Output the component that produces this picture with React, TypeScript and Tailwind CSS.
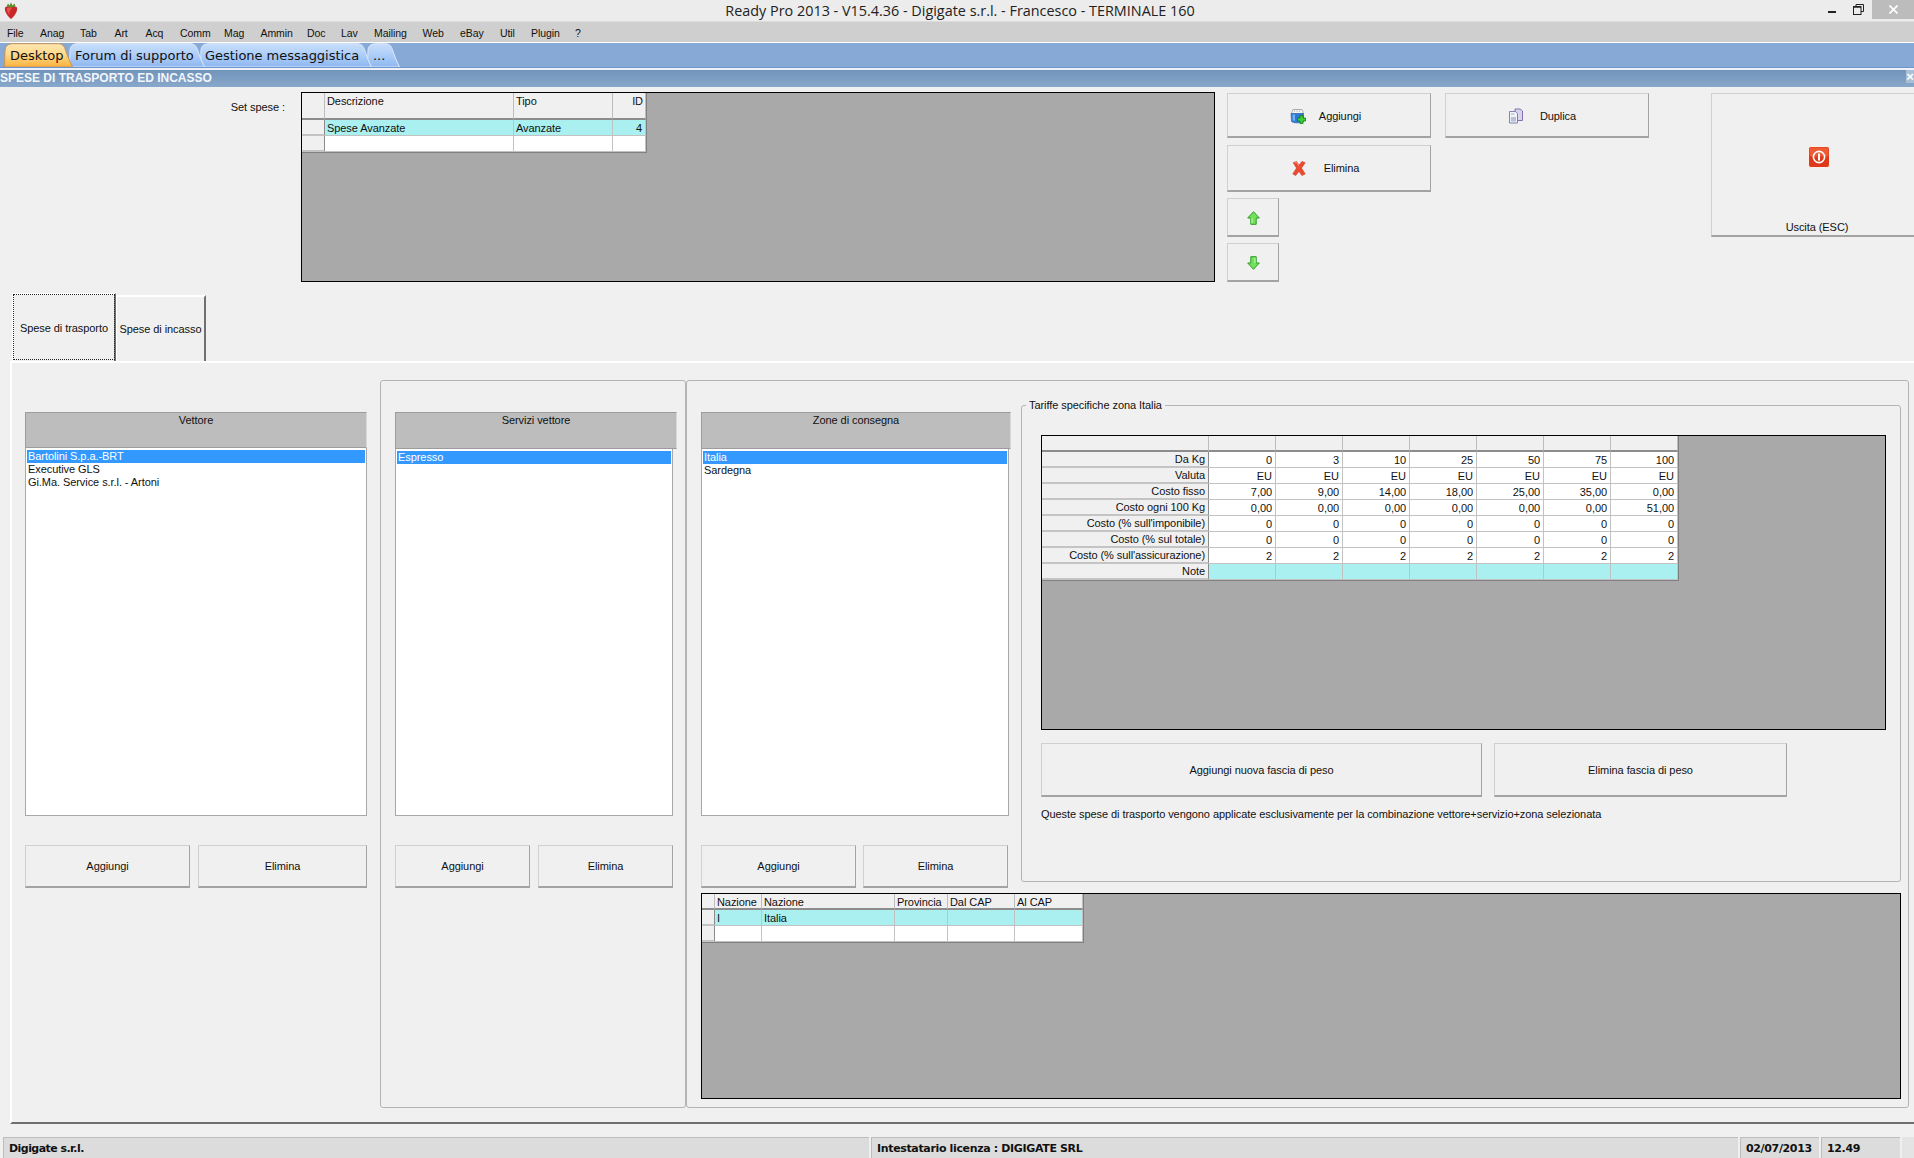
import React from "react";

const MENU: [string, string][] = [
  ["File", "w-[33px]"], ["Anag", "w-[40px]"], ["Tab", "w-[34.5px]"], ["Art", "w-[31px]"],
  ["Acq", "w-[34.5px]"], ["Comm", "w-[44px]"], ["Mag", "w-[36.5px]"], ["Ammin", "w-[46.5px]"],
  ["Doc", "w-[34px]"], ["Lav", "w-[33px]"], ["Mailing", "w-[48.5px]"], ["Web", "w-[37.5px]"],
  ["eBay", "w-[40px]"], ["Util", "w-[31px]"], ["Plugin", "w-[44px]"], ["?", "w-[10px]"],
];

function Strawberry() {
  return (
    <svg width="14" height="17" viewBox="0 0 14 17" className="ml-[4px] shrink-0">
      <path d="M1 5.5C3 3.5 11 3.5 13 5.5C14 9 10 15 7 17C4 15 0 9 1 5.5Z" fill="#c9262a" />
      <path d="M3 6C5 5 7 5 8 6C6 8 5 11 5.5 13C3.5 11 2.5 8 3 6Z" fill="#e2534a" />
      <path d="M2.5 4.5L4 1.5L5.5 3.5L7 0.5L8.5 3.5L10.5 1.5L11.5 4.5L7 5.5Z" fill="#5d8a2c" />
    </svg>
  );
}

function AddIcon() {
  return (
    <svg width="16" height="16" viewBox="0 0 16 16" className="shrink-0">
      <path d="M3 1.5H12L13 3.5V6H2V3.5Z" fill="#f3f3f3" stroke="#9a9a9a" strokeWidth="0.8" />
      <path d="M4.5 2.2V4M7 2.2V4M9.5 2.2V4" stroke="#b5b5b5" strokeWidth="0.8" />
      <path d="M1 5.5H13.5V13.5C12 15.3 3 15.3 1.5 13.5Z" fill="#2f78d6" stroke="#1c5aa8" strokeWidth="0.6" />
      <path d="M2.5 6.5H5V13L2.8 12.5Z" fill="#6fb0ef" />
      <path d="M10 7.5H13V10H15.5V13H13V15.5H10V13H7.5V10H10Z" fill="#3fce3c" stroke="#0f7a16" strokeWidth="0.8" />
    </svg>
  );
}

function DupIcon() {
  return (
    <svg width="16" height="16" viewBox="0 0 16 16" className="shrink-0">
      <path d="M7 1H12L14.5 3V12.5H7Z" fill="#d9d3ea" stroke="#7768a8" strokeWidth="0.9" />
      <path d="M1.5 3.5H7.5L9.5 5.5V15H1.5Z" fill="#f1f2f8" stroke="#6f79ab" strokeWidth="0.9" />
      <rect x="3" y="9" width="5" height="4.5" fill="#b8bfd9" />
      <path d="M3 6H6.5" stroke="#a2a9c8" strokeWidth="0.9" />
    </svg>
  );
}

function XIcon() {
  return (
    <svg width="14" height="15" viewBox="0 0 16 18" className="shrink-0">
      <path d="M1 2L5 0.5L8 5L11.5 0.5L15.5 2L11 8.5L15.5 15.5L11.5 17.5L8 12.5L4 17.5L0.5 15.5L5 8.5Z" fill="#ea4a2e" stroke="#c9301c" strokeWidth="0.6" />
      <path d="M3 2L5 1.5L8 6.5" stroke="#fb9a80" strokeWidth="1" fill="none" />
    </svg>
  );
}

function ArrowIcon({ down }: { down?: boolean }) {
  return (
    <svg width="13" height="14" viewBox="0 0 13 14" className={down ? "rotate-180 shrink-0" : "shrink-0"}>
      <path d="M6.5 0.7L12.3 7H9.2V13.3H3.8V7H0.7Z" fill="#6fe25a" stroke="#2f9a25" strokeWidth="1" />
      <path d="M5 7V12.3" stroke="#b6f5a6" strokeWidth="1.2" />
    </svg>
  );
}

function PowerIcon() {
  return (
    <svg width="22" height="22" viewBox="0 0 22 22" className="shrink-0">
      <rect x="0.5" y="0.5" width="21" height="21" rx="2.5" fill="#dd3a1c" stroke="#fdeee8" />
      <rect x="1.5" y="1.5" width="19" height="9" rx="2" fill="#ee5a34" />
      <circle cx="11" cy="11" r="5.6" fill="none" stroke="#fff" strokeWidth="1.6" />
      <rect x="10" y="7.5" width="2" height="7" fill="#fff" />
    </svg>
  );
}

function Btn({ className, children }: { className: string; children?: React.ReactNode }) {
  return (
    <div className={"flex items-center justify-center pt-[1px] shrink-0 bg-[#f0f0f0] border-[1.5px] border-t-[#cfcfd4] border-l-[#cfcfd4] border-r-[#a3a3a3] border-b-2 border-b-[#a3a3a3] text-[#111] " + className}>
      {children}
    </div>
  );
}

function Tab({ w, wc, label, active, ml, tx, z }: { w: number; wc: string; label: string; active?: boolean; ml?: string; tx: string; z: string }) {
  const id = active ? "tabActive" : "tabNormal" + w;
  return (
    <div className={"relative h-[24px] text-[13px] tracking-[-0.03px] text-[#111] [font-family:'DejaVu_Sans',sans-serif] " + wc + " " + z + " " + (ml ?? "")}>
      <svg className="absolute inset-0 w-full h-full" viewBox={`0 0 ${w} 24`}>
        <defs>
          <linearGradient id={id} x1="0" y1="0" x2="0" y2="1">
            <stop offset="0" stopColor={active ? "#fde6b2" : "#c8defb"} />
            <stop offset="0.45" stopColor={active ? "#ffd98a" : "#aecff9"} />
            <stop offset="1" stopColor={active ? "#fbb23e" : "#8fb7f0"} />
          </linearGradient>
        </defs>
        <path
          d={`M0.5 24L1 7Q1.5 1 8 0.7H${w - 14}Q${w - 9} 1 ${w - 7.5} 7Q${w - 5} 15 ${w - 0.5} 24Z`}
          fill={`url(#${id})`}
          stroke={active ? "#c4935a" : "#dbe8fb"}
          strokeWidth="1"
        />
      </svg>
      <span className={"relative block whitespace-nowrap leading-[26px] " + tx}>{label}</span>
    </div>
  );
}

function HeaderCell({ children, right, top }: { children?: React.ReactNode; right?: boolean; top?: boolean }) {
  return (
    <td className={"bg-[#f0f0f0] border-r border-r-[#bdbdbd] border-b-2 border-b-[#8c8c8c] p-0 pl-[2px] pr-[2px] " + (top ? "align-top pt-[2px] " : "pt-[2px] leading-[12px] ") + (right ? "text-right" : "text-left")}>
      {children}
    </td>
  );
}

function Cell({ children, right, bg }: { children?: React.ReactNode; right?: boolean; bg?: string }) {
  return (
    <td className={"border-r border-b border-[#c2c2c2] p-0 pl-[2px] pr-[3px] pt-[1px] whitespace-nowrap overflow-hidden " + (bg ?? "bg-white") + (right ? " text-right" : " text-left")}>
      {children}
    </td>
  );
}

function RowHead({ children, right }: { children?: React.ReactNode; right?: boolean }) {
  return (
    <td className={"bg-[#f0f0f0] border-r border-r-[#8c8c8c] border-b-2 border-b-[#c4c4c4] p-0 pl-[2px] pr-[3px] pt-[1px] whitespace-nowrap " + (right ? "text-right" : "")}>
      {children}
    </td>
  );
}

function ListBox({ title, items, wrapW, listW, headH, listH }: { title: string; items: string[]; wrapW: string; listW: string; headH: string; listH: string }) {
  return (
    <div className={"flex flex-col " + wrapW}>
      <div className={"bg-[#bdbdbd] border border-[#d8d8d8] border-t-[#9c9c9c] border-l-[#9c9c9c] border-b-[#9c9c9c] text-center pt-[1px] leading-[13px] " + headH}>{title}</div>
      <div className={"bg-white border border-[#a8a8a8] border-t-0 px-[1px] pt-[2px] " + listH + " " + listW}>
        {items.map((t, i) => (
          <div key={t} className={"h-[13px] leading-[13px] px-[1px] whitespace-nowrap " + (i === 0 ? "bg-[#3399ff] text-white" : "text-[#111]")}>{t}</div>
        ))}
      </div>
    </div>
  );
}

const TARIFFE: [string, string[]][] = [
  ["Da Kg", ["0","3","10","25","50","75","100"]],
  ["Valuta", ["EU","EU","EU","EU","EU","EU","EU"]],
  ["Costo fisso", ["7,00","9,00","14,00","18,00","25,00","35,00","0,00"]],
  ["Costo ogni 100 Kg", ["0,00","0,00","0,00","0,00","0,00","0,00","51,00"]],
  ["Costo (% sull'imponibile)", ["0","0","0","0","0","0","0"]],
  ["Costo (% sul totale)", ["0","0","0","0","0","0","0"]],
  ["Costo (% sull'assicurazione)", ["2","2","2","2","2","2","2"]],
];

export default function App() {
  return (
    <div className="w-[1914px] h-[1158px] overflow-hidden flex flex-col bg-[#f0f0f0] text-[11px] tracking-[-0.07px] leading-[13px] text-[#111] [font-family:'Liberation_Sans',Arial,sans-serif]">
      {/* Window title */}
      <div className="h-[22px] shrink-0 flex items-center bg-[#ececec] border-b border-[#dcdcdc]">
        <Strawberry />
        <div className="flex-1 text-center text-[14.4px] tracking-normal text-[#222] pl-[74px] [font-family:'Open_Sans',sans-serif]">Ready Pro 2013 - V15.4.36 - Digigate s.r.l. - Francesco - TERMINALE 160</div>
        <div className="flex items-start self-start h-[19px]">
          <div className="w-[8px] h-[2px] bg-[#222] mt-[11px] mr-[17px]" />
          <svg width="11" height="11" viewBox="0 0 11 11" className="mt-[4px] mr-[8px]">
            <path d="M3 2.5V0.5H10.5V7.5H8" fill="none" stroke="#222" strokeWidth="1" />
            <rect x="0.5" y="2.5" width="7.5" height="8" fill="none" stroke="#222" strokeWidth="1" />
            <path d="M0.5 3H8" stroke="#222" strokeWidth="1.5" />
          </svg>
          <div className="w-[42px] h-[19px] bg-[#bcbcbc] flex items-center justify-center">
            <svg width="9" height="9" viewBox="0 0 9 9"><path d="M0.5 0.5L8.5 8.5M8.5 0.5L0.5 8.5" stroke="#fff" strokeWidth="1.6" /></svg>
          </div>
        </div>
      </div>
      {/* Menu */}
      <div className="h-[20px] shrink-0 flex items-center pl-[7px] pt-[2px] bg-[#cfcfcf] text-[10.5px] text-[#111]">
        {MENU.map(([m, w]) => <span key={m} className={"block whitespace-nowrap " + w}>{m}</span>)}
      </div>
      <div className="h-[1px] shrink-0 bg-white" />
      {/* Tabs */}
      <div className="h-[24px] shrink-0 flex bg-[#87a9d6] pl-[4px]">
        <div className="flex items-end h-[24px]">
          <Tab w={69} wc="w-[69px]" z="z-40" label="Desktop" active tx="pl-[6px]" />
          <Tab w={136} wc="w-[136px]" z="z-30" ml="-ml-[4px]" label="Forum di supporto" tx="pl-[6px]" />
          <Tab w={172} wc="w-[172px]" z="z-20" ml="-ml-[5px]" label="Gestione messaggistica" tx="pl-[5px]" />
          <Tab w={33} wc="w-[33px]" z="z-10" ml="-ml-[5px]" label="..." tx="pl-[6px]" />
        </div>
      </div>
      <div className="h-[3px] shrink-0 bg-[#eef2f8] border-t border-[#6f95cf]" />
      {/* Panel title */}
      <div className="h-[17px] shrink-0 flex items-center justify-between bg-gradient-to-b from-[#7294bb] to-[#88a8cb] text-[#f2f6fb] font-bold text-[12px] tracking-normal">
        <span className="whitespace-nowrap">SPESE DI TRASPORTO ED INCASSO</span>
        <div className="w-[8px] h-[13px] self-start bg-[#a8bfd8] flex items-center justify-center text-white text-[13px]">×</div>
      </div>

      {/* Top section */}
      <div className="h-[206px] shrink-0 flex items-start pt-[5px]">
        <div className="w-[301px] shrink-0 pt-[9px] pr-[16px] text-right">Set spese :</div>
        <div className="w-[914px] h-[190px] shrink-0 bg-[#a9a9a9] border-[1.5px] border-black">
          <table className="table-fixed border-separate border-spacing-0 w-[344px] border-r border-b border-[#808080]">
            <colgroup><col className="w-[23px]" /><col className="w-[189px]" /><col className="w-[99px]" /><col className="w-[33px]" /></colgroup>
            <tbody>
              <tr className="h-[27px]">
                <HeaderCell /><HeaderCell top>Descrizione</HeaderCell><HeaderCell top>Tipo</HeaderCell><HeaderCell top right>ID</HeaderCell>
              </tr>
              <tr className="h-[16px]">
                <RowHead /><Cell bg="bg-[#aaf0f0]">Spese Avanzate</Cell><Cell bg="bg-[#aaf0f0]">Avanzate</Cell><Cell bg="bg-[#aaf0f0]" right>4</Cell>
              </tr>
              <tr className="h-[16px]">
                <RowHead /><Cell /><Cell /><Cell />
              </tr>
            </tbody>
          </table>
        </div>
        <div className="ml-[12px] w-[204px] shrink-0 flex flex-col items-start pt-[1px]">
          <Btn className="w-[204px] h-[45px]">
            <div className="flex items-center gap-[13px] pr-[7px] mt-[1px]"><AddIcon /><span>Aggiungi</span></div>
          </Btn>
          <Btn className="w-[204px] h-[47px] mt-[7px]">
            <div className="flex items-center gap-[18px] pr-[7px]"><XIcon /><span>Elimina</span></div>
          </Btn>
          <Btn className="w-[52px] h-[39px] mt-[6px]"><ArrowIcon /></Btn>
          <Btn className="w-[52px] h-[39px] mt-[6px]"><ArrowIcon down /></Btn>
        </div>
        <Btn className="w-[204px] h-[45px] ml-[14px] mt-[1px]">
          <div className="flex items-center gap-[16px] pr-[10px] mt-[1px]"><DupIcon /><span>Duplica</span></div>
        </Btn>
        <Btn className="w-[203px] h-[144px] ml-[62px] mt-[1px] !border-r-0 !flex-col !justify-start">
          <div className="mt-[51px] ml-[12px]"><PowerIcon /></div>
          <span className="mt-[53px] ml-[8px]">Uscita (ESC)</span>
        </Btn>
      </div>

      {/* Page tabs */}
      <div className="h-[68px] shrink-0 flex items-end pl-[12px]">
        <div className="w-[104px] h-[68px] border-t-2 border-l-2 border-white border-r-2 border-r-[#707070] flex items-center justify-center outline-1 outline-dotted outline-[#222] -outline-offset-2">
          Spese di trasporto
        </div>
        <div className="w-[90px] h-[66px] border-t-2 border-l border-white border-r-2 border-r-[#707070] flex items-center justify-center whitespace-nowrap pt-[1px]">
          Spese di incasso
        </div>
      </div>

      {/* Page */}
      <div className="ml-[10px] h-[763px] shrink-0 flex items-start border-t-2 border-l-2 border-white border-b-2 border-b-[#6f6f6f] pt-[17px] pl-[13px]">
        <div className="w-[342px] shrink-0 mt-[32px]">
          <ListBox title="Vettore" wrapW="w-[342px]" listW="w-[342px]" headH="h-[36px]" listH="h-[368px]" items={["Bartolini S.p.a.-BRT","Executive GLS","Gi.Ma. Service s.r.l. - Artoni"]} />
          <div className="flex mt-[29px] gap-[8px]">
            <Btn className="w-[165px] h-[43px]">Aggiungi</Btn>
            <Btn className="w-[169px] h-[43px]">Elimina</Btn>
          </div>
        </div>
        {/* Servizi group */}
        <div className="ml-[13px] w-[306px] h-[728px] shrink-0 border border-[#b4b4b4] rounded-[3px] pl-[14px] pt-[31px]">
          <ListBox title="Servizi vettore" wrapW="w-[282px]" listW="w-[278px]" headH="h-[37px]" listH="h-[367px]" items={["Espresso"]} />
          <div className="flex mt-[29px] gap-[8px]">
            <Btn className="w-[135px] h-[43px]">Aggiungi</Btn>
            <Btn className="w-[135px] h-[43px]">Elimina</Btn>
          </div>
        </div>
        {/* Zone group */}
        <div className="w-[1223px] h-[728px] shrink-0 border border-[#b4b4b4] rounded-[3px] pl-[14px] pt-[17px] flex flex-col">
          <div className="flex items-start h-[489px] shrink-0">
            <div className="w-[310px] shrink-0 mt-[14px]">
              <ListBox title="Zone di consegna" wrapW="w-[310px]" listW="w-[308px]" headH="h-[37px]" listH="h-[367px]" items={["Italia","Sardegna"]} />
              <div className="flex mt-[29px] gap-[7px]">
                <Btn className="w-[155px] h-[43px]">Aggiungi</Btn>
                <Btn className="w-[145px] h-[43px]">Elimina</Btn>
              </div>
            </div>
            <fieldset className="ml-[10px] w-[880px] h-[484px] shrink-0 border border-[#b4b4b4] rounded-[3px] pl-[19px] pt-[22px]">
              <legend className="-ml-[15px] px-[3px] leading-[15px]">Tariffe specifiche zona Italia</legend>
              <div className="w-[845px] h-[295px] bg-[#a9a9a9] border-[1.5px] border-black">
                <table className="table-fixed border-separate border-spacing-0 w-[637px] border-r border-b border-[#808080]">
                  <colgroup>
                    <col className="w-[167px]" />
                    <col className="w-[67px]" /><col className="w-[67px]" /><col className="w-[67px]" /><col className="w-[67px]" /><col className="w-[67px]" /><col className="w-[67px]" /><col className="w-[67px]" />
                  </colgroup>
                  <tbody>
                    <tr className="h-[16px]">
                      {Array.from({ length: 8 }).map((_, i) => <HeaderCell key={i} />)}
                    </tr>
                    {TARIFFE.map(([label, vals]) => (
                      <tr key={label} className="h-[16px]">
                        <RowHead right>{label}</RowHead>
                        {vals.map((v, i) => <Cell key={i} right>{v}</Cell>)}
                      </tr>
                    ))}
                    <tr className="h-[16px]">
                      <RowHead right>Note</RowHead>
                      {Array.from({ length: 7 }).map((_, i) => <Cell key={i} bg="bg-[#aaf0f0]" />)}
                    </tr>
                  </tbody>
                </table>
              </div>
              <div className="flex mt-[13px] gap-[12px]">
                <Btn className="w-[441px] h-[54px]">Aggiungi nuova fascia di peso</Btn>
                <Btn className="w-[293px] h-[54px]">Elimina fascia di peso</Btn>
              </div>
              <div className="mt-[11px] whitespace-nowrap">Queste spese di trasporto vengono applicate esclusivamente per la combinazione vettore+servizio+zona selezionata</div>
            </fieldset>
          </div>
          <div className="w-[1200px] h-[206px] mt-[6px] shrink-0 bg-[#a9a9a9] border-[1.5px] border-black">
            <table className="table-fixed border-separate border-spacing-0 w-[381px] border-r border-b border-[#808080]">
              <colgroup><col className="w-[13px]" /><col className="w-[47px]" /><col className="w-[133px]" /><col className="w-[53px]" /><col className="w-[67px]" /><col className="w-[68px]" /></colgroup>
              <tbody>
                <tr className="h-[16px]">
                  <HeaderCell /><HeaderCell>Nazione</HeaderCell><HeaderCell>Nazione</HeaderCell><HeaderCell>Provincia</HeaderCell><HeaderCell>Dal CAP</HeaderCell><HeaderCell>Al CAP</HeaderCell>
                </tr>
                <tr className="h-[16px]">
                  <RowHead /><Cell bg="bg-[#aaf0f0]">I</Cell><Cell bg="bg-[#aaf0f0]">Italia</Cell><Cell bg="bg-[#aaf0f0]" /><Cell bg="bg-[#aaf0f0]" /><Cell bg="bg-[#aaf0f0]" />
                </tr>
                <tr className="h-[16px]">
                  <RowHead /><Cell /><Cell /><Cell /><Cell /><Cell />
                </tr>
              </tbody>
            </table>
          </div>
        </div>
      </div>

      {/* Status bar */}
      <div className="flex-1 mt-[13px] flex pl-[3px] gap-[2px] font-bold text-[11px] tracking-[-0.35px] [font-family:'DejaVu_Sans',sans-serif]">
        <div className="w-[866px] bg-[#dcdcdc] border-t border-l border-[#bdbdbd] pl-[5px] pt-[4px] tracking-[-0.55px]">Digigate s.r.l.</div>
        <div className="w-[867px] bg-[#dcdcdc] border-t border-l border-[#bdbdbd] pl-[5px] pt-[4px]">Intestatario licenza : DIGIGATE SRL</div>
        <div className="w-[79px] bg-[#dcdcdc] border-t border-l border-[#bdbdbd] pl-[5px] pt-[4px]">02/07/2013</div>
        <div className="w-[79px] bg-[#dcdcdc] border-t border-l border-[#bdbdbd] pl-[5px] pt-[4px]">12.49</div>
        <div className="flex-1 bg-[#e4e4e4]" />
      </div>
    </div>
  );
}
